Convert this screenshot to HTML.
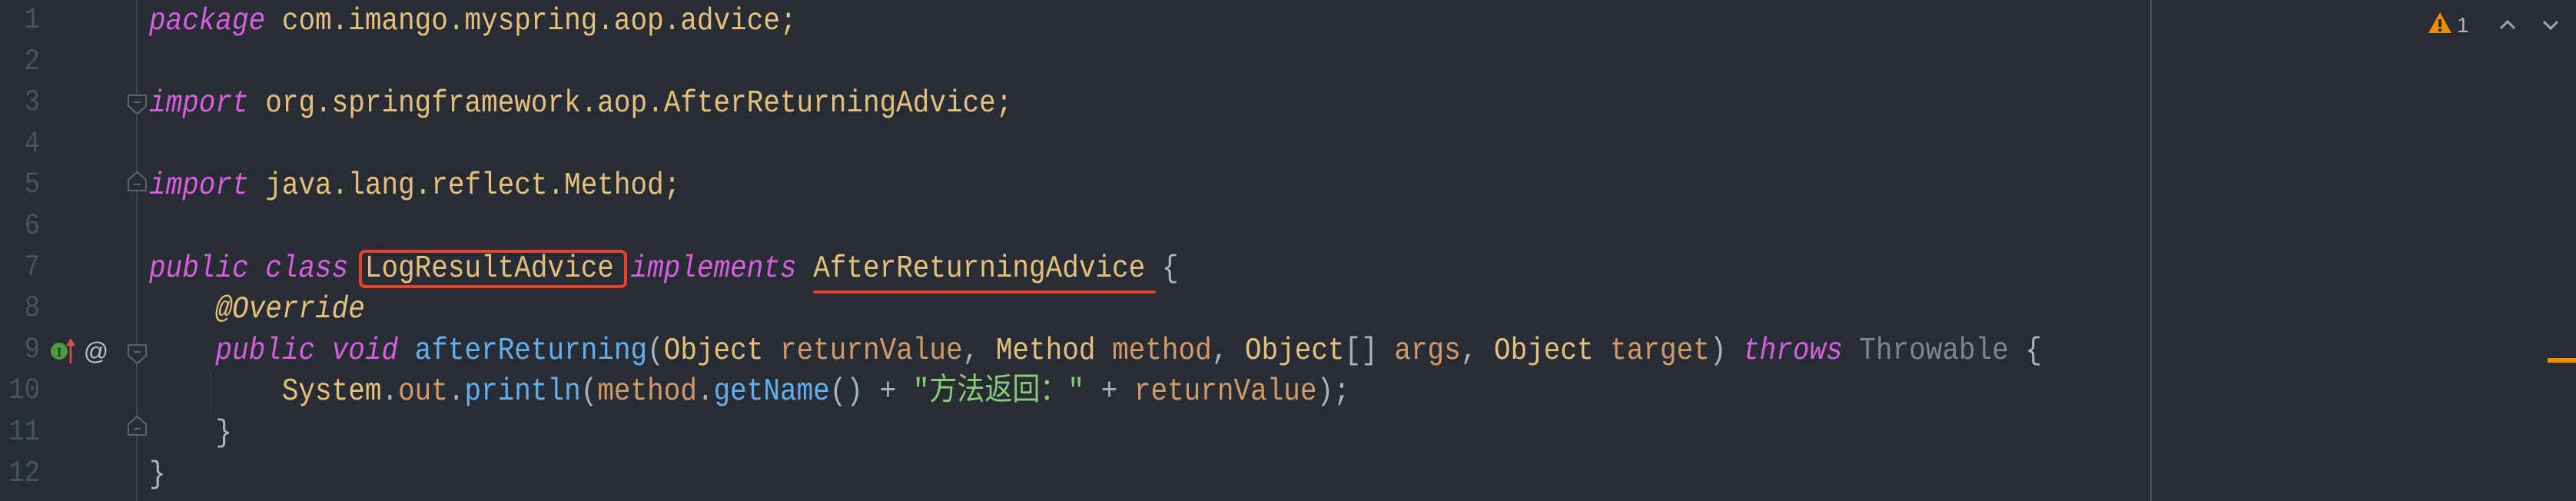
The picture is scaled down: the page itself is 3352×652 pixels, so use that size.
<!DOCTYPE html>
<html><head><meta charset="utf-8"><style>
html,body{margin:0;padding:0;}
body{width:3352px;height:652px;background:#282c34;position:relative;overflow:hidden;font-family:"Liberation Mono","Noto Sans CJK SC",monospace;}
.ln{position:absolute;left:0;width:52px;text-align:right;color:#4b5263;font-size:34px;height:53.6px;line-height:53.6px;transform:scaleY(1.15);transform-origin:50% 50%;}
.code{position:absolute;left:194px;font-size:36px;white-space:pre;height:53.6px;line-height:53.6px;color:#abb2bf;transform:scaleY(1.12);transform-origin:0 50%;}
.k{color:#d55fde;font-style:italic}
.y{color:#e5c07b}
.o{color:#d19a66}
.b{color:#61afef}
.g{color:#89ca78}
.gr{color:#7f848e}
.p{color:#abb2bf}
</style></head><body>
<div style="position:absolute;left:177px;top:0;width:2px;height:652px;background:#3e434d"></div>
<div style="position:absolute;left:2798px;top:0;width:2px;height:652px;background:#4b5060"></div>
<div style="position:absolute;left:274px;top:485px;width:1px;height:53px;background:#3e434d"></div>

<div class="ln" style="top:1px">1</div>
<div class="ln" style="top:55px">2</div>
<div class="ln" style="top:108px">3</div>
<div class="ln" style="top:162px">4</div>
<div class="ln" style="top:215px">5</div>
<div class="ln" style="top:269px">6</div>
<div class="ln" style="top:323px">7</div>
<div class="ln" style="top:376px">8</div>
<div class="ln" style="top:430px">9</div>
<div class="ln" style="top:483px">10</div>
<div class="ln" style="top:537px">11</div>
<div class="ln" style="top:591px">12</div>

<div class="code" style="top:1px"><span class="k">package</span> <span class="y">com.imango.myspring.aop.advice;</span></div>
<div class="code" style="top:108px"><span class="k">import</span> <span class="y">org.springframework.aop.AfterReturningAdvice;</span></div>
<div class="code" style="top:215px"><span class="k">import</span> <span class="y">java.lang.reflect.Method;</span></div>
<div class="code" style="top:323px"><span class="k">public class</span> <span class="y">LogResultAdvice</span> <span class="k">implements</span> <span class="y">AfterReturningAdvice</span> {</div>
<div class="code" style="top:376px">    <span class="y" style="font-style:italic">@Override</span></div>
<div class="code" style="top:430px">    <span class="k">public void</span> <span class="b">afterReturning</span>(<span class="y">Object</span> <span class="o">returnValue</span>, <span class="y">Method</span> <span class="o">method</span>, <span class="y">Object</span>[] <span class="o">args</span>, <span class="y">Object</span> <span class="o">target</span>) <span class="k">throws</span> <span class="gr">Throwable</span> {</div>
<div class="code" style="top:483px">        <span class="y">System</span>.<span class="o">out</span>.<span class="b">println</span>(<span class="o">method</span>.<span class="b">getName</span>() + <span class="g">"方法返回："</span> + <span class="o">returnValue</span>);</div>
<div class="code" style="top:537px">    }</div>
<div class="code" style="top:591px">}</div>

<div style="position:absolute;left:467px;top:325px;width:341px;height:42px;border:4px solid #e8402a;border-radius:8px"></div>
<div style="position:absolute;left:1058px;top:378px;width:446px;height:4px;background:#e8402a;border-radius:2px"></div>

<svg style="position:absolute;left:0;top:0" width="300" height="652">
<g stroke="#5c6370" stroke-width="2" fill="#282c34">
<path d="M167 124 h23 v14 l-11.5 10 l-11.5 -10 z"/><line x1="174" y1="133" x2="183" y2="133"/>
<path d="M167 248 h23 v-14 l-11.5 -10 l-11.5 10 z"/><line x1="174" y1="240" x2="183" y2="240"/>
<path d="M167 449 h23 v14 l-11.5 10 l-11.5 -10 z"/><line x1="174" y1="458" x2="183" y2="458"/>
<path d="M167 566 h23 v-14 l-11.5 -10 l-11.5 10 z"/><line x1="174" y1="558" x2="183" y2="558"/>
</g>
<circle cx="77" cy="457" r="11" fill="#4e9a3e"/>
<text x="77" y="464" font-family="Liberation Serif" font-size="17" font-weight="bold" fill="#2b3a2a" text-anchor="middle">I</text>
<line x1="92" y1="473" x2="92" y2="448" stroke="#d9534f" stroke-width="2.5"/>
<path d="M86 450 L92 440 L98 450 Z" fill="#d9534f"/>
<text x="125" y="468" font-family="Liberation Sans" font-size="32" fill="#b8bcc4" text-anchor="middle">@</text>
</svg>

<svg style="position:absolute;left:3160px;top:0" width="192" height="60">
<path d="M15 16 L30 43 L0 43 Z" fill="#f08c00"/>
<rect x="13" y="25" width="4" height="10" fill="#282c34"/><rect x="13" y="37" width="4" height="4" fill="#282c34"/>
<text x="37" y="42" font-family="Liberation Sans" font-size="28" fill="#abb2bf">1</text>
<path d="M94 37 L103 28 L112 37" stroke="#9da5b4" stroke-width="3" fill="none"/>
<path d="M150 28 L159 37 L168 28" stroke="#9da5b4" stroke-width="3" fill="none"/>
</svg>
<div style="position:absolute;left:3315px;top:466px;width:37px;height:6px;background:#f08c00"></div>
</body></html>
